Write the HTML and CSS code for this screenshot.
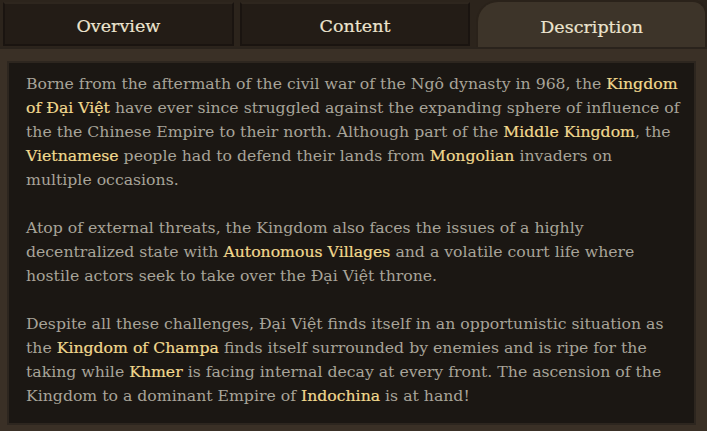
FILE: index.html
```html
<!DOCTYPE html>
<html lang="en">
<head>
  <meta charset="UTF-8">
  <meta name="viewport" content="width=device-width, initial-scale=1.0"/>
  <title>Description</title>
  <link rel="stylesheet" href="styles.css">
</head>
<body>

  <div class="tabs">
    <div class="tab">Overview</div>
    <div class="tab">Content</div>
    <div class="tab active">Description</div>
  </div>

  <div class="panel">
    <p>Borne from the aftermath of the civil war of the Ngô dynasty in 968, the <span class="hl">Kingdom of Đại Việt</span> have ever since struggled against the expanding sphere of influence of the the Chinese Empire to their north. Although part of the <span class="hl">Middle Kingdom</span>, the <span class="hl">Vietnamese</span> people had to defend their lands from <span class="hl">Mongolian</span> invaders on multiple occasions.</p>

    <p>Atop of external threats, the Kingdom also faces the issues of a highly decentralized state with <span class="hl">Autonomous Villages</span> and a volatile court life where hostile actors seek to take over the Đại Việt throne.</p>

    <p>Despite all these challenges, Đại Việt finds itself in an opportunistic situation as the <span class="hl">Kingdom of Champa</span> finds itself surrounded by enemies and is ripe for the taking while <span class="hl">Khmer</span> is facing internal decay at every front. The ascension of the Kingdom to a dominant Empire of <span class="hl">Indochina</span> is at hand!</p>
  </div>

</body>
</html>
```

FILE: styles.css
```css
:root {
  --bg: #3a3026;
  --tab: #231c16;
  --tab-on: #3d3429;
  --panel: #1b1713;
  --text: #a8a499;
  --hl: #f1d98e;
}

* {
  margin: 0;
  padding: 0;
  box-sizing: border-box;
}

body {
  width: 707px;
  height: 431px;
  overflow: hidden;
  background: var(--bg);
  font-family: "DejaVu Serif", serif;
}

.tabs {
  display: flex;
  gap: 6px;
  height: 49px;
  padding: 2px 0 0 3px;
  background: #2c241c;
  border-bottom: 2px solid #2a231c;
}

.tab {
  flex: 1;
  display: flex;
  align-items: center;
  justify-content: center;
  padding-top: 4px;
  background: var(--tab);
  border: 2px solid #1a1410;
  border-top-color: #2e261e;
  color: #ece4cf;
  font-size: 17.5px;
  -webkit-text-stroke: 0.2px #ece4cf;
  height: 44px;
}

.tab.active {
  background: var(--tab-on);
  border: 2px solid #2a221a;
  border-bottom: none;
  border-radius: 22px 14px 0 0;
  height: 47px;
  margin-top: -2px;
  padding-top: 5px;
}

.panel {
  margin: 12px 11px 0 7px;
  height: 364px;
  background: var(--panel);
  border: 2px solid #2d261f;
  padding: 9px 14px 0 17px;
  color: var(--text);
  font-size: 15.7px;
  line-height: 24px;
}

.panel p {
  margin-bottom: 24px;
}

.hl {
  color: var(--hl);
  -webkit-text-stroke: 0.2px var(--hl);
}
```
